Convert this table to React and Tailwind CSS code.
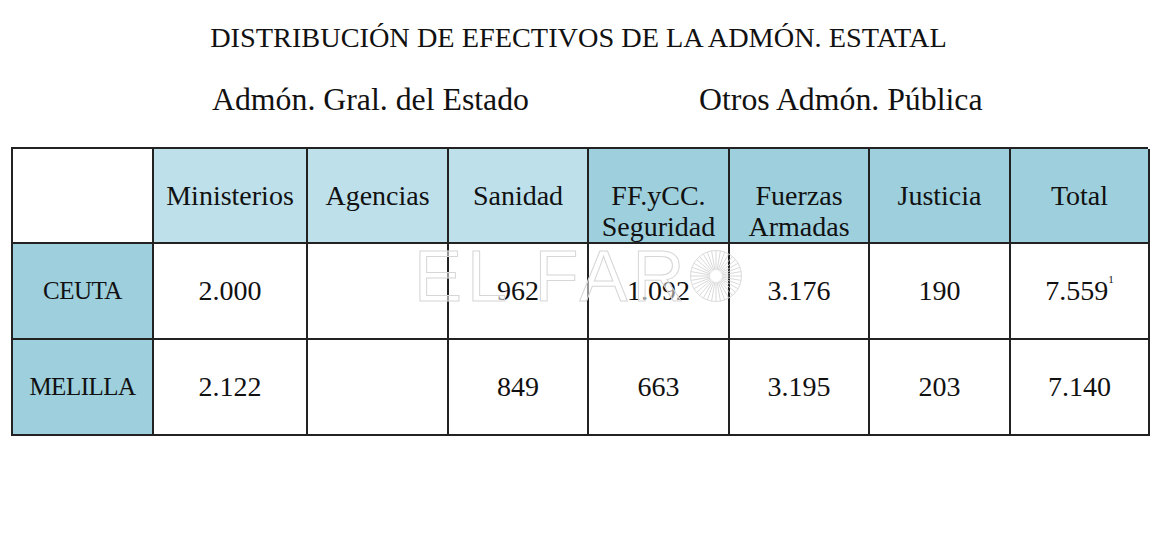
import React from "react";

const serif = { fontFamily: '"Liberation Serif", "Times New Roman", serif' };

const header = [
  { label: ["Ministerios"], light: true },
  { label: ["Agencias"], light: true },
  { label: ["Sanidad"], light: true },
  { label: ["FF.yCC.", "Seguridad"] },
  { label: ["Fuerzas", "Armadas"] },
  { label: ["Justicia"] },
  { label: ["Total"] },
];

const rows = [
  { name: "CEUTA", values: ["2.000", "", "962", "1.092", "3.176", "190", "7.559"], note: "1" },
  { name: "MELILLA", values: ["2.122", "", "849", "663", "3.195", "203", "7.140"] },
];

// sunburst "O" of the watermark
const Sunburst = () => {
  const rays = [];
  for (let i = 0; i < 36; i++) {
    const a = (i / 36) * Math.PI * 2;
    rays.push(
      <line
        key={i}
        x1={27 + Math.cos(a) * 6}
        y1={27 + Math.sin(a) * 6}
        x2={27 + Math.cos(a) * 25}
        y2={27 + Math.sin(a) * 25}
        stroke="#cfcfcf"
        strokeWidth="0.8"
      />
    );
  }
  return (
    <svg width="54" height="54" viewBox="0 0 54 54">
      <circle cx="27" cy="27" r="25.5" fill="none" stroke="#cfcfcf" strokeWidth="0.8" />
      {rays}
    </svg>
  );
};

const App = () => {
  return (
    <div className="relative w-[1157px] h-[551px] bg-white text-[#111]" style={serif}>
      <h1 className="pt-[21px] text-center text-[28.3px] leading-[34px]">
        DISTRIBUCIÓN DE EFECTIVOS DE LA ADMÓN. ESTATAL
      </h1>
      <div className="mt-[28px] flex text-[31.8px] leading-[34px]">
        <div className="ml-[212px]">Admón. Gral. del Estado</div>
        <div className="ml-[170px]">Otros Admón. Pública</div>
      </div>

      <div className="ml-[11px] mt-[30px] grid w-[1137px] grid-cols-[141px_154px_141px_140px_141px_140px_141px_139px] grid-rows-[95px_96px_96px] border-l-2 border-t-2 border-[#222]">
        <div className="border-b-2 border-r-2 border-[#222] bg-white" />
        {header.map((h, i) => (
          <div
            key={i}
            className={
              "flex flex-col items-center border-b-2 border-r-2 border-[#222] pt-[31px] text-[28px] leading-[31px] " +
              (h.light ? "bg-[#bde0ea]" : "bg-[#9dcfdd]")
            }
          >
            {h.label.map((l) => (
              <span key={l}>{l}</span>
            ))}
          </div>
        ))}
        {rows.map((r) => (
          <React.Fragment key={r.name}>
            <div className="flex items-center justify-center border-b-2 border-r-2 border-[#222] bg-[#9dcfdd] text-[25px] tracking-[-0.5px]">
              {r.name}
            </div>
            {r.values.map((v, i) => (
              <div
                key={i}
                className="flex items-center justify-center border-b-2 border-r-2 border-[#222] bg-white text-[28px]"
              >
                {v}
                {i === 6 && r.note && <sup className="-mt-[14px] text-[11px]">{r.note}</sup>}
              </div>
            ))}
          </React.Fragment>
        ))}
      </div>

      {/* watermark */}
      <div className="pointer-events-none absolute left-[414px] top-[250px] flex h-[52px] items-center">
        <span
          className="text-[72px] leading-[52px] tracking-[5px] text-white/50 [-webkit-text-stroke:1px_#d6d6d6]"
          style={{ fontFamily: '"Liberation Sans", Arial, sans-serif' }}
        >
          EL FAR
        </span>
        <Sunburst />
      </div>
    </div>
  );
};

export default App;
